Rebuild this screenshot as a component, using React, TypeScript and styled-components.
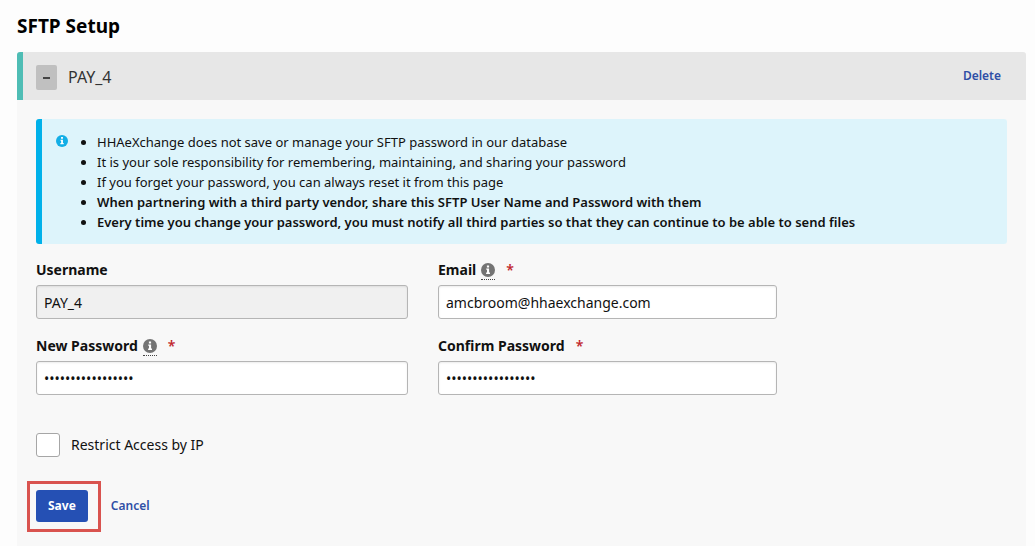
import React, { useState } from 'react';
import styled, { createGlobalStyle } from 'styled-components';

const GlobalStyle = createGlobalStyle`
  *, *::before, *::after { box-sizing: border-box; }
  body {
    margin: 0;
    background: #fdfdfd;
    color: #111;
    font-family: "Noto Sans", "Open Sans", sans-serif;
    font-size: 14px;
    line-height: 20px;
  }
  #root { display: flex; flex-direction: column; min-height: 100vh; }
`;

const Page = styled.main`
  flex: 1;
  display: flex;
  flex-direction: column;
  padding: 12px 9px 0 17px;
`;

const Title = styled.h1`
  margin: 0 0 12px;
  font-size: 19px;
  line-height: 28px;
  font-weight: 700;
  color: #000;
`;

const Panel = styled.section`
  flex: 1;
  display: flex;
  flex-direction: column;
  background: #f8f8f8;
  border-radius: 3px 3px 0 0;
`;

const PanelHeader = styled.header`
  display: flex;
  align-items: center;
  gap: 11px;
  height: 48px;
  padding: 0 25px 0 13px;
  border-left: 6px solid #4fbdb5;
  border-radius: 3px 3px 0 0;
  background: #e7e7e7;
`;

const ToggleButton = styled.button`
  display: flex;
  align-items: center;
  justify-content: center;
  width: 21px;
  height: 25px;
  margin-top: 3px;
  padding: 0;
  border: 0;
  border-radius: 2px;
  background: #c0c0c0;
  cursor: pointer;
`;

const PanelName = styled.h2`
  flex: 1;
  margin: 2px 0 0;
  font-size: 16px;
  line-height: 24px;
  font-weight: 400;
  color: #333;
`;

const LinkAction = styled.a`
  color: #2f4fa6;
  font-size: 12px;
  font-weight: 600;
  text-decoration: none;
`;

const PanelBody = styled.form`
  padding: 19px 19px 14px;
`;

const Notice = styled.div`
  display: flex;
  padding: 13px 13px 12px 14px;
  border-left: 6px solid #00b1ea;
  border-radius: 3px;
  background: #ddf4fb;
  font-size: 13px;

  > svg { flex: none; margin-top: 3px; }
`;

const NoticeList = styled.ul`
  margin: 0;
  padding: 0 0 0 29px;
`;

const NoticeItem = styled.li<{ $strong?: boolean }>`
  font-weight: ${(p) => (p.$strong ? 600 : 400)};
`;

const Fields = styled.div`
  display: grid;
  grid-template-columns: 372fr 339fr 200fr;
  gap: 17px 30px;
  margin-top: 16px;
`;

const Field = styled.div<{ $first?: boolean }>`
  grid-column: ${(p) => (p.$first ? 1 : 2)};
  display: flex;
  flex-direction: column;
  gap: 5px;
`;

const LabelRow = styled.div`
  display: flex;
  align-items: center;
  height: 20px;
`;

const FieldLabel = styled.label`
  font-weight: 700;
`;

const Hint = styled.span`
  display: flex;
  height: 17px;
  margin: 3px 0 0 5px;
  border-bottom: 1px dotted #444;
`;

const Required = styled.span`
  margin-left: 11px;
  color: #c1272d;
  font-weight: 600;
`;

const TextInput = styled.input`
  width: 100%;
  height: 34px;
  padding: 0 7px;
  border: 1px solid #b5b5b5;
  border-radius: 3px;
  background: #fff;
  box-shadow: inset 0 1px 2px rgba(0, 0, 0, 0.08);
  color: #111;
  font: inherit;

  &:read-only { background: #f0f0f0; }
`;

const CheckRow = styled.label`
  display: flex;
  align-items: center;
  gap: 11px;
  width: fit-content;
  margin-top: 38px;
`;

const CheckBox = styled.input`
  appearance: none;
  width: 24px;
  height: 24px;
  margin: 0;
  border: 1px solid #a6a6a6;
  border-radius: 3px;
  background: #fff;

  &:checked { background: #2550b4; box-shadow: inset 0 0 0 4px #fff; }
`;

const Actions = styled.div`
  display: flex;
  align-items: center;
  gap: 23px;
  margin-top: 33px;
`;

const Highlight = styled.div`
  position: relative;

  &::after {
    content: "";
    position: absolute;
    inset: -9px -13px -10px -9px;
    border: 3px solid #d9534f;
    pointer-events: none;
  }
`;

const SaveButton = styled.button`
  display: block;
  height: 32px;
  padding: 0 12px;
  border: 0;
  border-radius: 3px;
  background: #2550b4;
  color: #fff;
  font: inherit;
  font-size: 12px;
  font-weight: 700;
  cursor: pointer;
`;

function InfoIcon({ size, color, mark }: { size: number; color: string; mark: string }) {
  return (
    <svg width={size} height={size} viewBox="0 0 14 14" aria-hidden="true">
      <circle cx="7" cy="7" r="7" fill={color} />
      <path d="M5.9 2.4h2.2v2H5.9zM5.2 5.4h2.9v4h.9v1.5H5.1V9.4H6V6.8h-.8z" fill={mark} />
    </svg>
  );
}

type FieldProps = {
  id: string;
  label: string;
  value: string;
  type?: string;
  first?: boolean;
  hint?: boolean;
  required?: boolean;
  readOnly?: boolean;
};

function FormField({ id, label, value, type = 'text', first, hint, required, readOnly }: FieldProps) {
  return (
    <Field $first={first}>
      <LabelRow>
        <FieldLabel htmlFor={id}>{label}</FieldLabel>
        {hint && (
          <Hint>
            <InfoIcon size={14} color="#747474" mark="#fff" />
          </Hint>
        )}
        {required && <Required>*</Required>}
      </LabelRow>
      <TextInput id={id} type={type} defaultValue={value} readOnly={readOnly} required={required} />
    </Field>
  );
}

const notices = [
  { text: 'HHAeXchange does not save or manage your SFTP password in our database' },
  { text: 'It is your sole responsibility for remembering, maintaining, and sharing your password' },
  { text: 'If you forget your password, you can always reset it from this page' },
  { text: 'When partnering with a third party vendor, share this SFTP User Name and Password with them', strong: true },
  {
    text: 'Every time you change your password, you must notify all third parties so that they can continue to be able to send files',
    strong: true,
  },
];

export default function App() {
  const [open, setOpen] = useState(true);

  return (
    <>
      <GlobalStyle />
      <Page>
        <Title>SFTP Setup</Title>
        <Panel>
          <PanelHeader>
            <ToggleButton type="button" aria-label="Toggle PAY_4" aria-expanded={open} onClick={() => setOpen(!open)}>
              <svg width="7" height="7" viewBox="0 0 7 7" aria-hidden="true">
                <path d={open ? 'M0 3h7v2H0z' : 'M0 3h7v1H0zM3 0h1v7H3z'} fill="#444" />
              </svg>
            </ToggleButton>
            <PanelName>PAY_4</PanelName>
            <LinkAction href="#delete">Delete</LinkAction>
          </PanelHeader>
          {open && (
            <PanelBody onSubmit={(e) => e.preventDefault()}>
              <Notice>
                <InfoIcon size={12} color="#12aee6" mark="#fff" />
                <NoticeList>
                  {notices.map((n) => (
                    <NoticeItem key={n.text} $strong={n.strong}>
                      {n.text}
                    </NoticeItem>
                  ))}
                </NoticeList>
              </Notice>
              <Fields>
                <FormField id="username" label="Username" value="PAY_4" first readOnly />
                <FormField id="email" label="Email" value="amcbroom@hhaexchange.com" hint required />
                <FormField id="password" label="New Password" type="password" value="abcdefghijklmnopq" first hint required />
                <FormField id="confirm" label="Confirm Password" type="password" value="abcdefghijklmnopq" required />
              </Fields>
              <CheckRow>
                <CheckBox type="checkbox" />
                Restrict Access by IP
              </CheckRow>
              <Actions>
                <Highlight>
                  <SaveButton type="submit">Save</SaveButton>
                </Highlight>
                <LinkAction href="#cancel">Cancel</LinkAction>
              </Actions>
            </PanelBody>
          )}
        </Panel>
      </Page>
    </>
  );
}
